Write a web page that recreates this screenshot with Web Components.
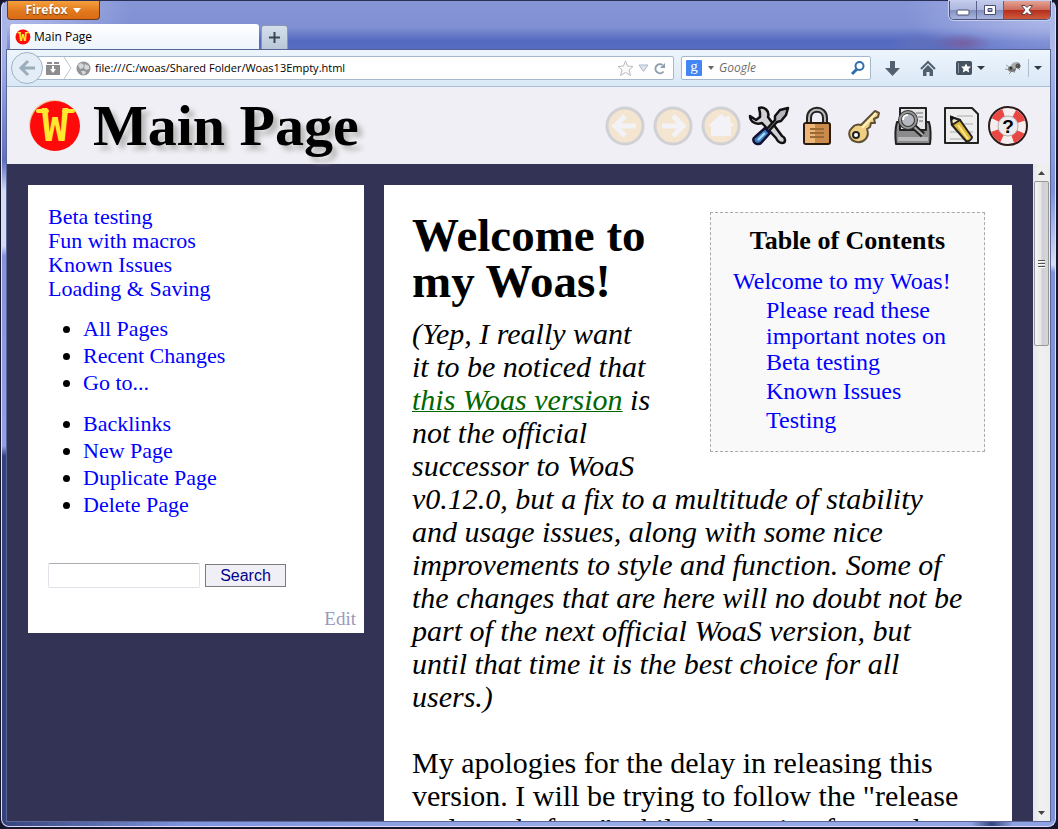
<!DOCTYPE html>
<html lang="en">
  <head>
    <meta charset="UTF-8" />
    <meta name="viewport" content="width=device-width, initial-scale=1.0" />
    <title>Main Page</title>
    <style>
      body {
        margin: 0;
        font-family: "Liberation Serif", serif;
      }
    </style>
  </head>
  <body>
    <!-- Window frame -->
    <template id="browser-window-template">
      <style>
        :host {
          display: block;
          height: 100vh;
          background: #15152b;
        }
        .frame {
          box-sizing: border-box;
          height: 100%;
          padding: 0 2px 2px 0;
        }
        .glass {
          box-sizing: border-box;
          height: 100%;
          display: flex;
          flex-direction: column;
          border: 1px solid #d9defa;
          border-top-color: #2a2d55;
          border-radius: 8px;
          margin-left: 1px;
          padding: 0 4px 4px;
          background:
            linear-gradient(90deg, #34427c, #7f93dc 180px, #9aabe9 55%, #93a5e6 92%, #34427c 94%, #8fa2e4 96%) bottom / 100% 5px no-repeat,
            linear-gradient(#a9b5e8 48px, #8c9ce0 90px, #5d6fc0 160px, #d6dcf4 190px, #d6dcf4 245px, #8791e0 255px, #93a0e8 445px, #34427c 455px) left / 5px 100% no-repeat,
            linear-gradient(#aeb8e8 48px, #8ea1e2 120px, #7d92dc 190px, #d8def4 264px, #8093d8 271px) right / 5px 100% no-repeat,
            radial-gradient(ellipse 150px 60px at 100% 10px, #b4bdec, #b4bdec00),
            radial-gradient(ellipse 130px 60px at 0 10px, #b8c1ee, #b8c1ee00),
            linear-gradient(#8595d6, #8090d3 26px, #5369c0 40px, #566cc4 48px);
        }
        .client {
          flex: 1;
          min-height: 0;
          display: flex;
          flex-direction: column;
          border: 1px solid #5b6796;
          border-top: 0;
          background: #333355;
        }
      </style>
      <div class="frame">
        <div class="glass">
          <slot name="title"></slot>
          <div class="client"><slot></slot></div>
        </div>
      </div>
    </template>

    <!-- Firefox button, tabs and window controls -->
    <template id="title-bar-template">
      <style>
        :host {
          display: flex;
          justify-content: space-between;
          height: 48px;
          padding-left: 1px;
          font: 12px/16px "Open Sans", sans-serif;
          /* blurred shape seen through the glass */
          background:
            radial-gradient(ellipse 30px 10px at 956px 42px, #7d5590b0, #7d559000),
            radial-gradient(ellipse 36px 10px at 916px 42px, #6a74b8a0, #6a74b800);
        }
        button {
          padding: 0;
          border: 0;
          font: inherit;
          cursor: pointer;
        }
        .left {
          display: flex;
          flex-direction: column;
          justify-content: space-between;
          align-items: flex-start;
        }
        .menu {
          display: flex;
          align-items: center;
          justify-content: center;
          gap: 6px;
          width: 93px;
          height: 19px;
          color: #fff;
          font-weight: 700;
          text-shadow: 0 1px 1px #7a3a00;
          background: linear-gradient(#f5a03c, #e0761c 60%, #d96c14);
          border: 1px solid #6b3a20;
          border-top: 0;
          border-radius: 0 0 4px 4px;
        }
        .tabs {
          display: flex;
          align-items: flex-end;
          gap: 2px;
          padding-left: 3px;
        }
        .tab {
          display: flex;
          align-items: center;
          gap: 3px;
          width: 249px;
          height: 25px;
          padding-left: 5px;
          box-sizing: border-box;
          color: #000;
          background: linear-gradient(#fff, #edf4fc);
          border-radius: 3px 3px 0 0;
        }
        .new {
          display: grid;
          place-items: center;
          width: 27px;
          height: 24px;
          background: linear-gradient(#d3dfeb, #b9c7d8);
          border: 1px solid #8997b5;
          border-bottom: 0;
          border-radius: 3px 3px 0 0;
          box-sizing: border-box;
        }
        .controls {
          display: flex;
          height: 18px;
          border: 1px solid #4d5273;
          border-top: 0;
          border-radius: 0 0 5px 5px;
          box-shadow: 0 0 0 1px #c5cdf0;
          overflow: hidden;
        }
        .controls button {
          display: grid;
          place-items: center;
          width: 27px;
          background: linear-gradient(#c3caea, #aeb7de 48%, #8590c0 52%, #a8b4e0);
          border-right: 1px solid #5a6088;
        }
        .controls .close {
          width: 46px;
          border: 0;
          background: linear-gradient(#e3a496, #cd6b5a 48%, #b52f1c 52%, #cf5a3d);
        }
        svg {
          display: block;
        }
      </style>
      <div class="left">
        <button class="menu">
          Firefox
          <svg width="8" height="5"><path d="M0 0h8L4 5z" fill="#fff" /></svg>
        </button>
        <div class="tabs">
          <button class="tab"><woas-logo style="--size: 16px"></woas-logo>Main Page</button>
          <button class="new" aria-label="New tab">
            <svg width="11" height="11"><path d="M5.500 0v11M0 5.500h11" stroke="#3b4654" stroke-width="2" /></svg>
          </button>
        </div>
      </div>
      <div class="controls">
        <button aria-label="Minimize">
          <svg width="14" height="14"><rect x="1" y="7" width="12" height="5" rx="1" fill="#fff" stroke="#4a4f6c" /></svg>
        </button>
        <button aria-label="Maximize">
          <svg width="14" height="12"><path fill-rule="evenodd" d="M1.500 1.500h11v9h-11zM5 4.500h4v3H5z" fill="#fff" stroke="#4a4f6c" /></svg>
        </button>
        <button class="close" aria-label="Close">
          <svg width="14" height="12"><path d="M1.500 1.500h3.500l2 2 2-2h3.500L9 6l3.500 4.500H9l-2-2-2 2H1.500L5 6z" fill="#fff" stroke="#5a4752" /></svg>
        </button>
      </div>
    </template>

    <!-- Address bar, search box and toolbar buttons -->
    <template id="nav-toolbar-template">
      <style>
        :host {
          display: flex;
          align-items: center;
          height: 36px;
          padding: 0 8px 0 4px;
          border-top: 1px solid #566292;
          border-bottom: 1px solid #a6bdd3;
          background: linear-gradient(#edf5fd, #dae8f6);
          font: 12px/16px "Open Sans", sans-serif;
        }
        button {
          display: grid;
          place-items: center;
          padding: 0;
          border: 0;
          background: none;
          cursor: pointer;
        }
        svg {
          display: block;
          overflow: visible;
        }
        .back {
          flex: none;
          z-index: 1;
          width: 32px;
          height: 32px;
          margin-right: -16px;
          border: 1px solid #9fb3c7;
          border-radius: 50%;
          background: #e3edf7;
        }
        .box {
          box-sizing: border-box;
          display: flex;
          align-items: center;
          height: 24px;
          background: #fff;
          border: 1px solid #a5b7cb;
          border-radius: 2px;
        }
        .address {
          flex: 1;
          gap: 4px;
          padding: 0 5px 0 18px;
        }
        .search {
          width: 190px;
          margin: 0 14px 0 7px;
          padding: 0 5px 0 4px;
          gap: 4px;
        }
        input {
          flex: 1;
          min-width: 0;
          padding: 0;
          border: 0;
          outline: 0;
          background: none;
          color: #000;
          font: inherit;
        }
        .address input {
          font-size: 11px;
        }
        input::placeholder {
          color: #6d6d6d;
          font-style: italic;
          opacity: 1;
        }
        .tools {
          display: flex;
          align-items: center;
          gap: 20px;
        }
        .extra {
          display: flex;
          align-items: center;
          gap: 5px;
        }
        .extra i {
          width: 1px;
          height: 18px;
          background: #aebfd0;
        }
      </style>
      <button class="back" aria-label="Back">
        <svg width="16" height="16"><path d="M9 1 2 8l7 7M3 8h13" fill="none" stroke="#9bacbb" stroke-width="3" /></svg>
      </button>
      <div class="box address">
        <svg width="14" height="13"><path d="M1 0h5v2H1zM8 0h5v2H8zM0 3h14v10H0z" fill="#8c8c8c" /><path d="M6 4h2v3h2l-3 4-3-4h2z" fill="#fff" /></svg>
        <svg width="8" height="22"><path d="M0 0 7 11 0 22" fill="none" stroke="#bfc6cf" /></svg>
        <svg width="15" height="15"><circle cx="7.500" cy="7.500" r="7" fill="#939699" /><path d="M2 4l3-2 3 2-1 3-3 1zM9 3l4 2v3l-3 1-2-2zM5 10l4 0 1 2-3 2z" fill="#d6d8da" /></svg>
        <input aria-label="Address" value="file:///C:/woas/Shared Folder/Woas13Empty.html" />
        <button aria-label="Bookmark"><svg width="17" height="16"><path d="M8.500 1l2 5 5.500.500-4 3.500 1.500 5.500-5-3-5 3L5 10 1 6.500 6.500 6z" fill="#fafafa" stroke="#b9bbbd" /></svg></button>
        <svg width="11" height="8"><path d="M1 1h9L5.500 7.500z" fill="#dce3ec" stroke="#adb8c6" /></svg>
        <button aria-label="Reload"><svg width="15" height="13" viewBox="0 0 15 13"><path d="M10.500 9.500A4.500 4.500 0 1 1 9.500 3" fill="none" stroke="#8d9eae" stroke-width="2" /><path d="M7 6h5V1z" fill="#8d9eae" /></svg></button>
      </div>
      <div class="box search">
        <svg width="16" height="16"><rect width="16" height="16" rx="1" fill="#4285f4" /><text x="8" y="11" text-anchor="middle" font-family="Liberation Serif, serif" font-size="15" fill="#fff">g</text></svg>
        <svg width="9" height="4"><path d="M2 0h6L5 4z" fill="#666" /></svg>
        <input aria-label="Search the web" placeholder="Google" />
        <button aria-label="Go"><svg width="14" height="14"><circle cx="8.500" cy="5" r="4" fill="none" stroke="#2f6fae" stroke-width="2" /><path d="M6 8 1 13" stroke="#2f6fae" stroke-width="3" /></svg></button>
      </div>
      <div class="tools">
        <button aria-label="Downloads"><svg width="15" height="15"><path d="M5 0h5v7h5l-7.500 8L0 7h5z" fill="#51606f" /></svg></button>
        <button aria-label="Home"><svg width="16" height="15"><path d="M1 8 8 1l7 7" fill="none" stroke="#51606f" stroke-width="2" /><path d="M3 9l5-5 5 5v6H9.500v-4h-3v4H3z" fill="#51606f" /></svg></button>
        <button aria-label="Bookmarks"><svg width="29" height="14"><rect width="16" height="14" rx="2" fill="#46525f" /><path d="M2.500 2v10" stroke="#8795a3" /><path d="M10 2.500l1.500 3H15l-2.500 2.500.700 3.500L10 9.800l-3.200 1.700.700-3.500L5 5.500h3.500z" fill="#fff" /><path d="M21 5h8l-4 4z" fill="#2f3944" /></svg></button>
        <div class="extra">
          <button aria-label="Firebug"><svg width="18" height="16"><path d="M1 5l6 4M0 9l6 1M4 14l4-4M9 13l1-4M15 10l-3-3" stroke="#979797" /><ellipse cx="7" cy="9" rx="4" ry="3" fill="#777" /><ellipse cx="10.500" cy="5.500" rx="5" ry="3" fill="#aaa" transform="rotate(-25 10 6)" /><circle cx="13" cy="6" r="2.500" fill="#555" /><circle cx="6" cy="8" r="1.500" fill="#333" /></svg></button>
          <i></i>
          <button aria-label="More"><svg width="8" height="4"><path d="M0 0h8L4 4z" fill="#2f3944" /></svg></button>
        </div>
      </div>
    </template>

    <!-- Red round logo -->
    <template id="woas-logo-template">
      <style>
        :host {
          display: block;
          width: var(--size, 54px);
          height: var(--size, 54px);
        }
        svg {
          display: block;
          width: 100%;
          height: 100%;
          overflow: visible;
        }
      </style>
      <svg viewBox="0 0 54 54" aria-hidden="true">
        <circle cx="26" cy="26" r="25" fill="#f0c4a0" />
        <circle cx="27" cy="27" r="25" fill="#ff0a0a" />
        <text x="27" y="42" text-anchor="middle" font-family="DejaVu Sans Mono, monospace" font-weight="700" font-size="44" fill="#ffe92e">W</text>
        <path d="M10 12h9M36 12h9" stroke="#ffe92e" stroke-width="4" stroke-linecap="round" />
      </svg>
    </template>

    <!-- Page title and wiki buttons -->
    <template id="wiki-header-template">
      <style>
        :host {
          display: flex;
          align-items: center;
          justify-content: space-between;
          height: 77px;
          padding: 0 20px 0 21px;
          background: #f0eff5;
        }
        .title {
          display: flex;
          align-items: center;
          gap: 11px;
        }
        h1 {
          margin: 0;
          font-size: 58px;
          line-height: 64px;
          text-shadow: 5px 5px 5px #bbb;
        }
        nav {
          display: flex;
          gap: 6px;
        }
      </style>
      <div class="title">
        <woas-logo></woas-logo>
        <h1><slot></slot></h1>
      </div>
      <nav><slot name="tools"></slot></nav>
    </template>

    <template id="wiki-tool-template">
      <style>
        :host {
          display: block;
        }
        :host([off]) {
          opacity: 0.25;
        }
        button {
          display: block;
          padding: 0;
          border: 0;
          background: none;
          cursor: pointer;
        }
        ::slotted(svg) {
          display: block;
          width: 42px;
          height: 42px;
        }
      </style>
      <button><slot></slot></button>
    </template>

    <!-- Scroll bar beside the wiki content -->
    <template id="scroll-bar-template">
      <style>
        :host {
          display: flex;
          flex-direction: column;
          align-items: center;
          flex: none;
          width: 17px;
          background: linear-gradient(90deg, #e6e6e6, #f0f0f0 40%, #ededed);
        }
        .up,
        .down {
          display: grid;
          place-items: center;
          height: 17px;
        }
        .thumb {
          box-sizing: border-box;
          display: grid;
          place-items: center;
          width: 15px;
          height: 165px;
          background: linear-gradient(90deg, #f5f5f5, #e8e8eb 45%, #cfcfd4 55%, #d5d5da);
          border: 1px solid #979797;
          border-radius: 2px;
        }
        .down {
          margin-top: auto;
        }
      </style>
      <div class="up"><svg width="7" height="4"><path d="M0 4 3.500 0 7 4z" fill="#444" /></svg></div>
      <div class="thumb"><svg width="7" height="9"><path d="M0 1.500h7M0 4.500h7M0 7.500h7" stroke="#555" /><path d="M0 2.500h7M0 5.500h7M0 8.500h7" stroke="#fff" /></svg></div>
      <div class="down"><svg width="7" height="4"><path d="M0 0h7L3.500 4z" fill="#444" /></svg></div>
    </template>

    <template id="wiki-layout-template">
      <style>
        :host {
          flex: 1;
          min-height: 0;
          display: flex;
        }
        .columns {
          flex: 1;
          min-width: 0;
          display: grid;
          grid-template-columns: 336px minmax(0, 1fr);
          gap: 20px;
          align-items: start;
          padding: 21px 21px 0;
          overflow: hidden;
        }
      </style>
      <div class="columns"><slot></slot></div>
      <scroll-bar></scroll-bar>
    </template>

    <template id="wiki-menu-template">
      <style>
        :host {
          display: block;
          padding: 20px 8px 3px 20px;
          background: #fff;
          font-size: 22px;
          line-height: 24px;
        }
        a {
          color: #00f;
          text-decoration: none;
        }
        .pages a {
          display: block;
        }
        ul {
          margin: 14px 0 0;
          padding-left: 35px;
          line-height: 27px;
        }
        form {
          display: flex;
          align-items: center;
          gap: 5px;
          margin-top: 45px;
        }
        input {
          box-sizing: border-box;
          width: 152px;
          height: 25px;
          border: 1px solid #e2e3ea;
          border-top-color: #abadb3;
          border-radius: 2px;
          font: 16px "Liberation Sans", sans-serif;
        }
        form button {
          box-sizing: border-box;
          width: 81px;
          height: 23px;
          padding: 0;
          border: 1px solid #7b7b7b;
          background: #f0eff5;
          color: #00008b;
          font: 16px/20px "Liberation Sans", sans-serif;
        }
        .edit {
          margin-top: 20px;
          text-align: right;
          font-size: 19px;
          line-height: 22px;
        }
        .edit a {
          color: #9999bb;
        }
      </style>
      <div class="pages">
        <a href="#">Beta testing</a>
        <a href="#">Fun with macros</a>
        <a href="#">Known Issues</a>
        <a href="#">Loading &amp; Saving</a>
      </div>
      <ul>
        <li><a href="#">All Pages</a></li>
        <li><a href="#">Recent Changes</a></li>
        <li><a href="#">Go to...</a></li>
      </ul>
      <ul>
        <li><a href="#">Backlinks</a></li>
        <li><a href="#">New Page</a></li>
        <li><a href="#">Duplicate Page</a></li>
        <li><a href="#">Delete Page</a></li>
      </ul>
      <form>
        <input type="text" aria-label="Search pages" />
        <button type="button">Search</button>
      </form>
      <div class="edit"><a href="#">Edit</a></div>
    </template>

    <template id="wiki-toc-template">
      <style>
        :host {
          box-sizing: border-box;
          display: block;
          width: 275px;
          padding: 15px 22px;
          border: 1px dashed #aaa;
          background: #f9f9f9;
          font-size: 24px;
          line-height: 26px;
        }
        h2 {
          margin: 0 0 14px;
          text-align: center;
          font-size: 26px;
          line-height: 26px;
          white-space: nowrap;
        }
        a {
          display: block;
          margin-bottom: 3px;
          color: #00f;
          text-decoration: none;
        }
        .sub {
          padding-left: 33px;
        }
      </style>
      <h2>Table of Contents</h2>
      <a href="#">Welcome to my Woas!</a>
      <div class="sub">
        <a href="#">Please read these important notes on Beta testing</a>
        <a href="#">Known Issues</a>
        <a href="#">Testing</a>
      </div>
    </template>

    <template id="wiki-article-template">
      <style>
        :host {
          display: block;
          padding: 27px 27px 27px 28px;
          background: #fff;
          color: #000;
          font-size: 30px;
          line-height: 33px;
        }
        wiki-toc {
          float: right;
          margin-left: 50px;
        }
        h1 {
          margin: 0 0 13px;
          font-size: 47px;
          line-height: 46px;
        }
        p {
          margin: 0 0 33px;
        }
        a {
          color: #060;
          text-decoration-thickness: 1px;
        }
      </style>
      <wiki-toc></wiki-toc>
      <h1>Welcome to my Woas!</h1>
      <p>
        <em>(Yep, I really want<br />
        it to be noticed that<br />
        <a href="#">this Woas version</a> is<br />
        not the official<br />
        successor to WoaS<br />
        v0.12.0, but a fix to a multitude of stability<br />
        and usage issues, along with some nice<br />
        improvements to style and function. Some of<br />
        the changes that are here will no doubt not be<br />
        part of the next official WoaS version, but<br />
        until that time it is the best choice for all<br />
        users.)</em>
      </p>
      <p>
        My apologies for the delay in releasing this<br />
        version. I will be trying to follow the "release<br />
        early and often," while also going forward
      </p>
    </template>

    <script>
      // Base class: clones the template called "<tag>-template" into the shadow root
      class TemplateElement extends HTMLElement {
        constructor() {
          super();
          const template = document.getElementById(
            this.localName + "-template"
          );
          this.attachShadow({ mode: "open" }).appendChild(
            template.content.cloneNode(true)
          );
        }
      }

      class WikiTool extends TemplateElement {
        connectedCallback() {
          const button = this.shadowRoot.querySelector("button");
          button.setAttribute("aria-label", this.getAttribute("label"));
          button.disabled = this.hasAttribute("off");
        }
      }

      customElements.define("woas-logo", class extends TemplateElement {});
      customElements.define("browser-window", class extends TemplateElement {});
      customElements.define("title-bar", class extends TemplateElement {});
      customElements.define("nav-toolbar", class extends TemplateElement {});
      customElements.define("wiki-header", class extends TemplateElement {});
      customElements.define("wiki-tool", WikiTool);
      customElements.define("scroll-bar", class extends TemplateElement {});
      customElements.define("wiki-layout", class extends TemplateElement {});
      customElements.define("wiki-menu", class extends TemplateElement {});
      customElements.define("wiki-toc", class extends TemplateElement {});
      customElements.define("wiki-article", class extends TemplateElement {});
    </script>

    <browser-window>
      <title-bar slot="title"></title-bar>
      <nav-toolbar></nav-toolbar>
      <wiki-header>
        Main Page
        <wiki-tool slot="tools" label="Back" off>
          <svg viewBox="0 0 42 42"><circle cx="21" cy="21" r="18" fill="#ffc860" stroke="#777" stroke-width="3" /><path d="M21 11 11 21l10 10M12 21h20" fill="none" stroke="#fff" stroke-width="5" /></svg>
        </wiki-tool>
        <wiki-tool slot="tools" label="Forward" off>
          <svg viewBox="0 0 42 42"><circle cx="21" cy="21" r="18" fill="#ffc860" stroke="#777" stroke-width="3" /><path d="M21 11l10 10-10 10M30 21H10" fill="none" stroke="#fff" stroke-width="5" /></svg>
        </wiki-tool>
        <wiki-tool slot="tools" label="Home" off>
          <svg viewBox="0 0 42 42"><circle cx="21" cy="21" r="18" fill="#ffc860" stroke="#777" stroke-width="3" /><path d="M21 9l5 4v-2h4v5l4 5h-3v10H11V21H8z" fill="#fff" /></svg>
        </wiki-tool>
        <wiki-tool slot="tools" label="Options">
          <svg viewBox="0 0 42 42" stroke="#111" stroke-width="2.500" stroke-linejoin="round">
            <path d="M11 3c5-2 11 3 9 9l14 19c4 2 4 7 0 7-3 0-5-3-6-5L14 18c-6 2-12-1-12-7l6 4 4-3 0-4z" fill="#d2d2d6" />
            <path d="M40 3l-8 2-5 6 0 4-10 11 2 2 10-11 4-1 5-6z" fill="#b6b6bb" />
            <path d="M17 23l5 5-9 10c-2 2-6 1-7-1s-1-4 1-5z" fill="#3d7fc4" stroke="#111133" />
            <path d="M17 28 10 35" stroke="#a9dcf5" stroke-width="2" />
          </svg>
        </wiki-tool>
        <wiki-tool slot="tools" label="Lock">
          <svg viewBox="0 0 42 42">
            <path d="M13 20v-7c0-11 16-11 16 0v7" fill="none" stroke="#222" stroke-width="6" />
            <path d="M13 20v-7c0-11 16-11 16 0v7" fill="none" stroke="#bbb" stroke-width="2" />
            <rect x="8" y="18" width="26" height="21" rx="2" fill="#c98b4b" stroke="#2b1b0c" stroke-width="2" />
            <path d="M9 19h10v19H9z" fill="#edb678" />
            <path d="M14 24h14M14 28h14M14 32h14" stroke="#9a6a35" stroke-width="2" />
          </svg>
        </wiki-tool>
        <wiki-tool slot="tools" label="Key">
          <svg viewBox="0 0 42 42" stroke="#5e5038" stroke-width="2" stroke-linejoin="round">
            <path d="M31 6l4 2-1 4-4 2 1 4-4 0-1 4-3 2c3 8-3 14-10 13-8-1-10-10-5-14 2-3 6-4 9-3z" fill="#f1cf82" />
            <path d="M32 8 18 23" stroke="#fff0bc" />
            <circle cx="12" cy="30" r="3" fill="#fff" stroke="#222" />
          </svg>
        </wiki-tool>
        <wiki-tool slot="tools" label="Search">
          <svg viewBox="0 0 42 42" stroke="#222" stroke-width="2" stroke-linejoin="round">
            <path d="M8 3h26v25H8z" fill="#e7e7e9" />
            <path d="M24 8h7M26 12h5M27 16h4" stroke="#aaa" />
            <path d="M8 17H5c-2 7-2 14-1 22h34c1-8 1-15-1-22h-3v8H8z" fill="#8b8b8e" />
            <path d="M6 34h30" stroke="#b8b8bb" stroke-width="4" />
            <path d="M21 21l10 9" stroke-width="6" />
            <path d="M21 21l10 9" stroke="#aaa" stroke-width="2" />
            <circle cx="16" cy="15" r="8" fill="#b5b8be" stroke="#333" stroke-width="4" />
            <circle cx="16" cy="15" r="8" fill="none" stroke="#999" />
            <path d="M11 15c0-3 2-5 5-5" fill="none" stroke="#fff" />
          </svg>
        </wiki-tool>
        <wiki-tool slot="tools" label="Edit">
          <svg viewBox="0 0 42 42" stroke-linejoin="round">
            <path d="M5 3h27l6 6v29H5z" fill="#eee" stroke="#222" stroke-width="2" />
            <path d="M17 11h16M10 19h23M10 27h23M10 34h20" stroke="#ccc" stroke-width="2" />
            <path d="M11 12l9 3 12 17c0 3-4 5-6 4L12 20z" fill="#dfb93b" stroke="#222" stroke-width="2" />
            <path d="M11 12l9 3-8 5z" fill="#f6e6bd" stroke="#222" stroke-width="2" />
            <path d="M18 20 28 34" stroke="#fbe98b" stroke-width="2" />
            <path d="M10 10l5 3-4 3z" fill="#111" />
          </svg>
        </wiki-tool>
        <wiki-tool slot="tools" label="Help">
          <svg viewBox="0 0 42 42">
            <circle cx="20" cy="21" r="19" fill="#f6eeee" stroke="#2b1a1a" stroke-width="2" />
            <circle cx="20" cy="21" r="14" fill="none" stroke="#e84743" stroke-width="8" stroke-dasharray="11 11" stroke-dashoffset="16" />
            <circle cx="20" cy="21" r="10" fill="#ececef" stroke="#b8a9a9" />
            <text x="20" y="28" text-anchor="middle" font-family="Liberation Sans, sans-serif" font-weight="700" font-size="19">?</text>
          </svg>
        </wiki-tool>
      </wiki-header>
      <wiki-layout>
        <wiki-menu></wiki-menu>
        <wiki-article></wiki-article>
      </wiki-layout>
    </browser-window>
  </body>
</html>
